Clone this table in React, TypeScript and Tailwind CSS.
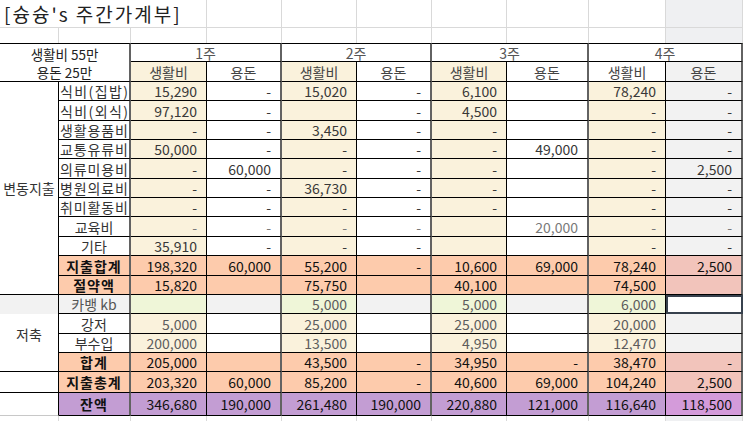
import React from "react";

type Kind = "cat" | "edu" | "sum" | "kb" | "save" | "bal";
type Row = { label: string; lk: "dist" | "center" | "bold"; kind: Kind; v: string[] };

const rows: Row[] = [
  { label: "식비(집밥)", lk: "dist", kind: "cat", v: ["15,290", "-", "15,020", "-", "6,100", "", "78,240", "-"] },
  { label: "식비(외식)", lk: "dist", kind: "cat", v: ["97,120", "-", "", "-", "4,500", "", "-", "-"] },
  { label: "생활용품비", lk: "dist", kind: "cat", v: ["-", "-", "3,450", "-", "-", "", "-", "-"] },
  { label: "교통유류비", lk: "dist", kind: "cat", v: ["50,000", "-", "-", "-", "-", "49,000", "-", "-"] },
  { label: "의류미용비", lk: "dist", kind: "cat", v: ["-", "60,000", "-", "-", "-", "", "-", "2,500"] },
  { label: "병원의료비", lk: "dist", kind: "cat", v: ["-", "-", "36,730", "-", "-", "", "-", "-"] },
  { label: "취미활동비", lk: "dist", kind: "cat", v: ["-", "-", "-", "-", "-", "", "-", "-"] },
  { label: "교육비", lk: "center", kind: "edu", v: ["-", "-", "-", "-", "", "20,000", "-", "-"] },
  { label: "기타", lk: "center", kind: "cat", v: ["35,910", "-", "-", "-", "", "", "-", "-"] },
  { label: "지출합계", lk: "bold", kind: "sum", v: ["198,320", "60,000", "55,200", "-", "10,600", "69,000", "78,240", "2,500"] },
  { label: "절약액", lk: "bold", kind: "sum", v: ["15,820", "", "75,750", "", "40,100", "", "74,500", ""] },
  { label: "카뱅 kb", lk: "center", kind: "kb", v: ["", "", "5,000", "", "5,000", "", "6,000", ""] },
  { label: "강저", lk: "center", kind: "save", v: ["5,000", "", "25,000", "", "25,000", "", "20,000", ""] },
  { label: "부수입", lk: "center", kind: "save", v: ["200,000", "", "13,500", "", "4,950", "", "12,470", ""] },
  { label: "합계", lk: "bold", kind: "sum", v: ["205,000", "", "43,500", "-", "34,950", "-", "38,470", "-"] },
  { label: "지출총계", lk: "bold", kind: "sum", v: ["203,320", "60,000", "85,200", "-", "40,600", "69,000", "104,240", "2,500"] },
  { label: "잔액", lk: "bold", kind: "bal", v: ["346,680", "190,000", "261,480", "190,000", "220,880", "121,000", "116,640", "118,500"] },
];

// right border of each sheet column
const RB = [
  "border-r border-r-black",
  "border-r-2 border-r-[#626262]",
  "border-r border-r-black",
  "border-r-2 border-r-[#626262]",
  "border-r border-r-black",
  "border-r-2 border-r-[#626262]",
  "border-r border-r-black",
  "border-r-2 border-r-[#626262]",
  "border-r border-r-black",
  "border-r-2 border-r-[#626262]",
];

function cellBg(kind: Kind, j: number) {
  const living = j % 2 === 0;
  if (kind === "sum") return j === 7 ? "bg-[#f2c4bb]" : "bg-[#fdcbac]";
  if (kind === "bal") return j === 7 ? "bg-[#d49bda]" : "bg-[#c39dd3]";
  if (kind === "kb") return living ? "bg-[#eff6d8]" : "bg-[#f2f2f2]";
  return living ? "bg-[#faf2dc]" : j === 7 ? "bg-[#f2f2f2]" : "bg-white";
}

function labelBg(kind: Kind) {
  if (kind === "sum") return "bg-[#fdcbac]";
  if (kind === "bal") return "bg-[#c39dd3]";
  if (kind === "kb") return "bg-[#f2f2f2]";
  return "bg-white";
}

function textColor(kind: Kind) {
  if (kind === "sum" || kind === "bal") return "text-[#111]";
  if (kind === "edu") return "text-[#7a7a7a]";
  if (kind === "save" || kind === "kb") return "text-[#5c5c5c]";
  return "text-[#383838]";
}

function Dist({ text }: { text: string }) {
  return (
    <div className="flex w-full justify-between px-[1px]">
      {[...text].map((c, i) => (
        <span key={i}>{c}</span>
      ))}
    </div>
  );
}

function Label({ row }: { row: Row }) {
  const base = `flex items-center border-b border-b-black ${RB[1]} ${labelBg(row.kind)}`;
  if (row.lk === "dist") {
    return (
      <div className={`${base} text-[#333]`}>
        <Dist text={row.label} />
      </div>
    );
  }
  if (row.lk === "bold") {
    return (
      <div className={`${base} justify-center font-bold tracking-[1px] text-[#111]`}>{row.label}</div>
    );
  }
  return (
    <div className={`${base} justify-center ${row.kind === "kb" ? "text-[#555]" : "text-[#333]"}`}>
      {row.label}
    </div>
  );
}

function LeftCell({ i }: { i: number }) {
  if (i === 0)
    return (
      <div className="row-span-11 flex items-center justify-center border-b border-r border-b-black border-r-black text-[#333]">
        변동지출
      </div>
    );
  if (i === 11) return <div className="border-r border-r-black bg-[#f2f2f2]" />;
  if (i === 12)
    return (
      <div className="row-span-2 flex items-center justify-center border-r border-r-black text-[#333]">
        저축
      </div>
    );
  if (i === 14 || i === 15) return <div className="border-b border-r border-b-black border-r-black" />;
  if (i === 16) return <div className="border-b border-r border-b-[#c8c8c8] border-r-black" />;
  return null;
}

export default function App() {
  const weeks = ["1주", "2주", "3주", "4주"];
  return (
    <div className="h-[421px] w-[743px] overflow-hidden bg-white font-['Noto_Sans_CJK_KR',sans-serif] text-[14px] leading-none">
      <div className="grid grid-cols-[59px_72px_76px_75px_75px_75px_75px_82px_77px_77px] grid-rows-[28px_15px_19px_20px_19px_20px_19px_19px_20px_19px_19px_20px_19px_20px_19px_19px_20px_19px_19px_21px_23px_5px]">
        {/* title row */}
        <div className="col-span-3 flex items-center whitespace-nowrap border-b border-r border-[#d9d9d9] pl-[4px] text-[19px] leading-[27px] tracking-[2px] text-[#222]">
          [슝슝's 주간가계부]
        </div>
        {[3, 4, 5, 6, 7, 8, 9].map((c) => (
          <div
            key={c}
            className={`border-b border-r border-[#d9d9d9] ${c === 9 ? "bg-[#eff0f2]" : ""}`}
          />
        ))}
        {/* blank row */}
        {[0, 1, 2, 3, 4, 5, 6, 7, 8, 9].map((c) => (
          <div key={c} className={`border-r border-[#d9d9d9] ${c === 9 ? "bg-[#eff0f2]" : ""}`} />
        ))}

        {/* header */}
        <div className="col-span-2 row-span-2 flex flex-col items-center justify-center border-t border-b border-t-black border-b-black border-r-2 border-r-[#626262] text-[13.5px] leading-[18px] text-[#222]">
          <span>생활비 55만</span>
          <span>용돈 25만</span>
        </div>
        {weeks.map((w) => (
          <div
            key={w}
            className="col-span-2 flex items-center justify-center border-t border-b border-t-black border-b-black border-r-2 border-r-[#626262] text-[#555]"
          >
            {w}
          </div>
        ))}
        {[0, 1, 2, 3, 4, 5, 6, 7].map((j) => (
          <div
            key={j}
            className={`flex items-center justify-center border-b border-b-black text-[#444] ${RB[j + 2]} ${
              j % 2 === 0 ? (j === 6 ? "bg-white" : "bg-[#faf2dc]") : j === 7 ? "bg-[#f2f2f2]" : "bg-white"
            }`}
          >
            {j % 2 === 0 ? "생활비" : "용돈"}
          </div>
        ))}

        {/* body */}
        {rows.map((row, i) => (
          <React.Fragment key={row.label}>
            <LeftCell i={i} />
            <Label row={row} />
            {row.v.map((val, j) =>
              row.kind === "kb" && j === 7 ? (
                <div key={j} className="border-2 border-[#37414d] bg-white" />
              ) : (
                <div
                  key={j}
                  className={`flex items-center justify-end border-b border-b-black pr-[9px] ${RB[j + 2]} ${cellBg(
                    row.kind,
                    j
                  )} ${textColor(row.kind)}`}
                >
                  {val}
                </div>
              )
            )}
          </React.Fragment>
        ))}

        {/* trailing grid row */}
        {[0, 1, 2, 3, 4, 5, 6, 7, 8, 9].map((c) => (
          <div key={c} className={`border-r border-[#d9d9d9] ${c === 9 ? "bg-[#eff0f2]" : ""}`} />
        ))}
      </div>
    </div>
  );
}
